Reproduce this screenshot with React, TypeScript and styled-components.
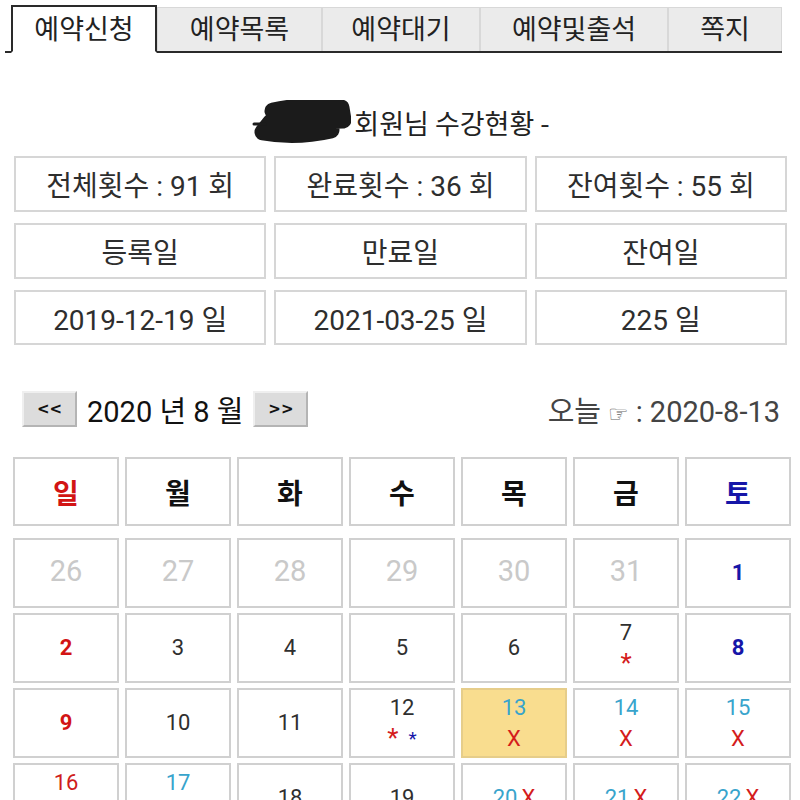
import styled, { createGlobalStyle, css } from "styled-components";
import React from "react";

const GlobalStyle = createGlobalStyle`
  html, body {
    margin: 0;
    padding: 0;
    background: #fff;
    overflow: hidden;
  }
  body {
    font-family: Roboto, "Noto Sans CJK KR", "Noto Sans", sans-serif;
    color: #333;
  }
`;

const Page = styled.div`
  width: 800px;
  padding-top: 5px;
`;

const TabBar = styled.div`
  display: inline-flex;
  align-items: flex-end;
  margin-left: 5px;
  padding-left: 6px;
  border-bottom: 2px solid #2a2a2a;
`;

const Tab = styled.div<{ $active?: boolean; $width: number }>`
  width: ${(p) => p.$width}px;
  box-sizing: border-box;
  text-align: center;
  font-family: "Noto Sans CJK KR", sans-serif;
  font-size: 27px;
  color: #222;
  ${(p) =>
    p.$active
      ? css`
          height: 48px;
          line-height: 42px;
          background: #fff;
          border: 2px solid #2a2a2a;
          border-bottom: 2px solid #fff;
          margin-bottom: -2px;
        `
      : css`
          height: 44px;
          line-height: 40px;
          background: #ebebeb;
          border: 1px solid #d8d8d8;
          border-bottom: none;
        `}
`;

const Content = styled.div`
  padding: 0 13px 0 14px;
`;

const Title = styled.div`
  display: flex;
  justify-content: center;
  align-items: center;
  margin-top: 46px;
  font-family: "Noto Sans CJK KR", sans-serif;
  font-size: 27px;
  color: #222;
  height: 46px;
`;

const InfoGrid = styled.div`
  display: grid;
  grid-template-columns: repeat(3, 1fr);
  grid-template-rows: 56px 56px 55px;
  column-gap: 8px;
  row-gap: 11px;
  margin-top: 11px;
`;

const InfoBox = styled.div`
  border: 2px solid #d6d6d6;
  display: flex;
  align-items: center;
  justify-content: center;
  font-size: 28px;
  color: #2e2e2e;
`;

const NavRow = styled.div`
  display: flex;
  justify-content: space-between;
  align-items: center;
  margin-top: 43px;
  padding-left: 8px;
  padding-right: 7px;
`;

const NavLeft = styled.div`
  display: flex;
  align-items: center;
  gap: 10px;
`;

const NavButton = styled.button`
  width: 55px;
  height: 36px;
  background: #dcdcdc;
  border: 2px solid;
  border-color: #efefef #b4b4b4 #b4b4b4 #efefef;
  font-family: "DejaVu Sans", sans-serif;
  font-weight: bold;
  font-size: 15px;
  color: #111;
  padding: 0;
`;

const MonthLabel = styled.span`
  font-size: 29px;
  color: #111;
`;

const TodayLabel = styled.span`
  font-size: 29px;
  color: #444;
`;

const Hand = styled.span`
  font-family: "DejaVu Sans", sans-serif;
  font-size: 23px;
  color: #666;
  margin: 0 7px;
`;

const CalGrid = styled.div<{ $rows: string }>`
  display: grid;
  grid-template-columns: repeat(7, 106px);
  grid-auto-rows: ${(p) => p.$rows};
  gap: 5px 6px;
  margin-left: -1px;
`;

const HeadGrid = styled(CalGrid)`
  margin-top: 27px;
  margin-bottom: 12px;
`;

const HeadCell = styled.div<{ $color: string }>`
  border: 2px solid #d0d0d0;
  display: flex;
  align-items: center;
  justify-content: center;
  font-family: "Noto Sans CJK KR", sans-serif;
  font-weight: bold;
  font-size: 28px;
  color: ${(p) => p.$color};
`;

const DayCell = styled.div<{ $today?: boolean }>`
  border: 2px solid ${(p) => (p.$today ? "#e6cd8a" : "#d0d0d0")};
  background: ${(p) => (p.$today ? "#f9dd8f" : "#fff")};
  display: flex;
  flex-direction: column;
  align-items: center;
  justify-content: center;
  line-height: 29px;
`;

type Kind = "prev" | "sun" | "sat" | "normal" | "open" | "holiday";

const numColor: Record<Kind, string> = {
  prev: "#c9c9c9",
  sun: "#d21414",
  sat: "#1616a8",
  normal: "#2f2f2f",
  open: "#38a4cc",
  holiday: "#cf1c1c",
};

const DayNum = styled.span<{ $kind: Kind }>`
  font-size: ${(p) => (p.$kind === "prev" ? "29px" : "22px")};
  font-weight: ${(p) => (p.$kind === "sun" || p.$kind === "sat" ? "bold" : "normal")};
  color: ${(p) => numColor[p.$kind]};
`;

const Mark = styled.span<{ $color: string; $size?: number }>`
  font-size: ${(p) => p.$size ?? 22}px;
  color: ${(p) => p.$color};
`;

const Stars = styled.span`
  display: flex;
  align-items: center;
  gap: 10px;
`;

type Day = {
  n: number;
  kind: Kind;
  today?: boolean;
  below?: React.ReactNode;
  inline?: React.ReactNode;
};

const X = <Mark $color="#d41c1c">X</Mark>;
const RedStar = (
  <Mark $color="#d41c1c" $size={26}>
    *
  </Mark>
);

const days: Day[] = [
  { n: 26, kind: "prev" },
  { n: 27, kind: "prev" },
  { n: 28, kind: "prev" },
  { n: 29, kind: "prev" },
  { n: 30, kind: "prev" },
  { n: 31, kind: "prev" },
  { n: 1, kind: "sat" },
  { n: 2, kind: "sun" },
  { n: 3, kind: "normal" },
  { n: 4, kind: "normal" },
  { n: 5, kind: "normal" },
  { n: 6, kind: "normal" },
  { n: 7, kind: "normal", below: RedStar },
  { n: 8, kind: "sat" },
  { n: 9, kind: "sun" },
  { n: 10, kind: "normal" },
  { n: 11, kind: "normal" },
  {
    n: 12,
    kind: "normal",
    below: (
      <Stars>
        {RedStar}
        <Mark $color="#1616a8" $size={19}>
          *
        </Mark>
      </Stars>
    ),
  },
  { n: 13, kind: "open", today: true, below: X },
  { n: 14, kind: "open", below: X },
  { n: 15, kind: "open", below: X },
  { n: 16, kind: "holiday", below: RedStar },
  { n: 17, kind: "open", below: X },
  { n: 18, kind: "normal" },
  { n: 19, kind: "normal" },
  { n: 20, kind: "open", inline: X },
  { n: 21, kind: "open", inline: X },
  { n: 22, kind: "open", inline: X },
  { n: 23, kind: "sun" },
  { n: 24, kind: "open", inline: X },
  { n: 25, kind: "open", inline: X },
  { n: 26, kind: "open", inline: X },
  { n: 27, kind: "open", inline: X },
  { n: 28, kind: "open", inline: X },
  { n: 29, kind: "sat" },
];

const weekdays = [
  { label: "일", color: "#d21414" },
  { label: "월", color: "#111" },
  { label: "화", color: "#111" },
  { label: "수", color: "#111" },
  { label: "목", color: "#111" },
  { label: "금", color: "#111" },
  { label: "토", color: "#1616a8" },
];

const tabs = [
  { label: "예약신청", width: 146 },
  { label: "예약목록", width: 165 },
  { label: "예약대기", width: 158 },
  { label: "예약및출석", width: 188 },
  { label: "쪽지", width: 114 },
];

// the name in front of the title is scribbled out
const Scribble = () => (
  <svg width="100" height="44" viewBox="0 0 100 44" style={{ marginRight: 3 }}>
    <g stroke="#1b1b1b" strokeWidth="17" strokeLinecap="round" strokeLinejoin="round" fill="none">
      <path d="M22 11 Q55 4 90 8 L92 20 L20 22 L12 32 Q45 38 80 30" />
    </g>
    <path d="M3 24 L14 24" stroke="#1b1b1b" strokeWidth="3" strokeLinecap="round" />
  </svg>
);

export default function App() {
  return (
    <Page>
      <GlobalStyle />
      <TabBar>
        {tabs.map((t, i) => (
          <Tab key={t.label} $active={i === 0} $width={t.width}>
            {t.label}
          </Tab>
        ))}
      </TabBar>
      <Content>
        <Title>
          <Scribble />
          회원님 수강현황 -
        </Title>
        <InfoGrid>
          <InfoBox>전체횟수 : 91 회</InfoBox>
          <InfoBox>완료횟수 : 36 회</InfoBox>
          <InfoBox>잔여횟수 : 55 회</InfoBox>
          <InfoBox>등록일</InfoBox>
          <InfoBox>만료일</InfoBox>
          <InfoBox>잔여일</InfoBox>
          <InfoBox>2019-12-19 일</InfoBox>
          <InfoBox>2021-03-25 일</InfoBox>
          <InfoBox>225 일</InfoBox>
        </InfoGrid>
        <NavRow>
          <NavLeft>
            <NavButton>&lt;&lt;</NavButton>
            <MonthLabel>2020 년 8 월</MonthLabel>
            <NavButton>&gt;&gt;</NavButton>
          </NavLeft>
          <TodayLabel>
            오늘<Hand>☞</Hand>: 2020-8-13
          </TodayLabel>
        </NavRow>
        <HeadGrid $rows="69px">
          {weekdays.map((w) => (
            <HeadCell key={w.label} $color={w.color}>
              {w.label}
            </HeadCell>
          ))}
        </HeadGrid>
        <CalGrid $rows="70px">
          {days.map((d, i) => (
            <DayCell key={i} $today={d.today}>
              <span>
                <DayNum $kind={d.kind}>{d.n}</DayNum>
                {d.inline && <> {d.inline}</>}
              </span>
              {d.below}
            </DayCell>
          ))}
        </CalGrid>
      </Content>
    </Page>
  );
}
